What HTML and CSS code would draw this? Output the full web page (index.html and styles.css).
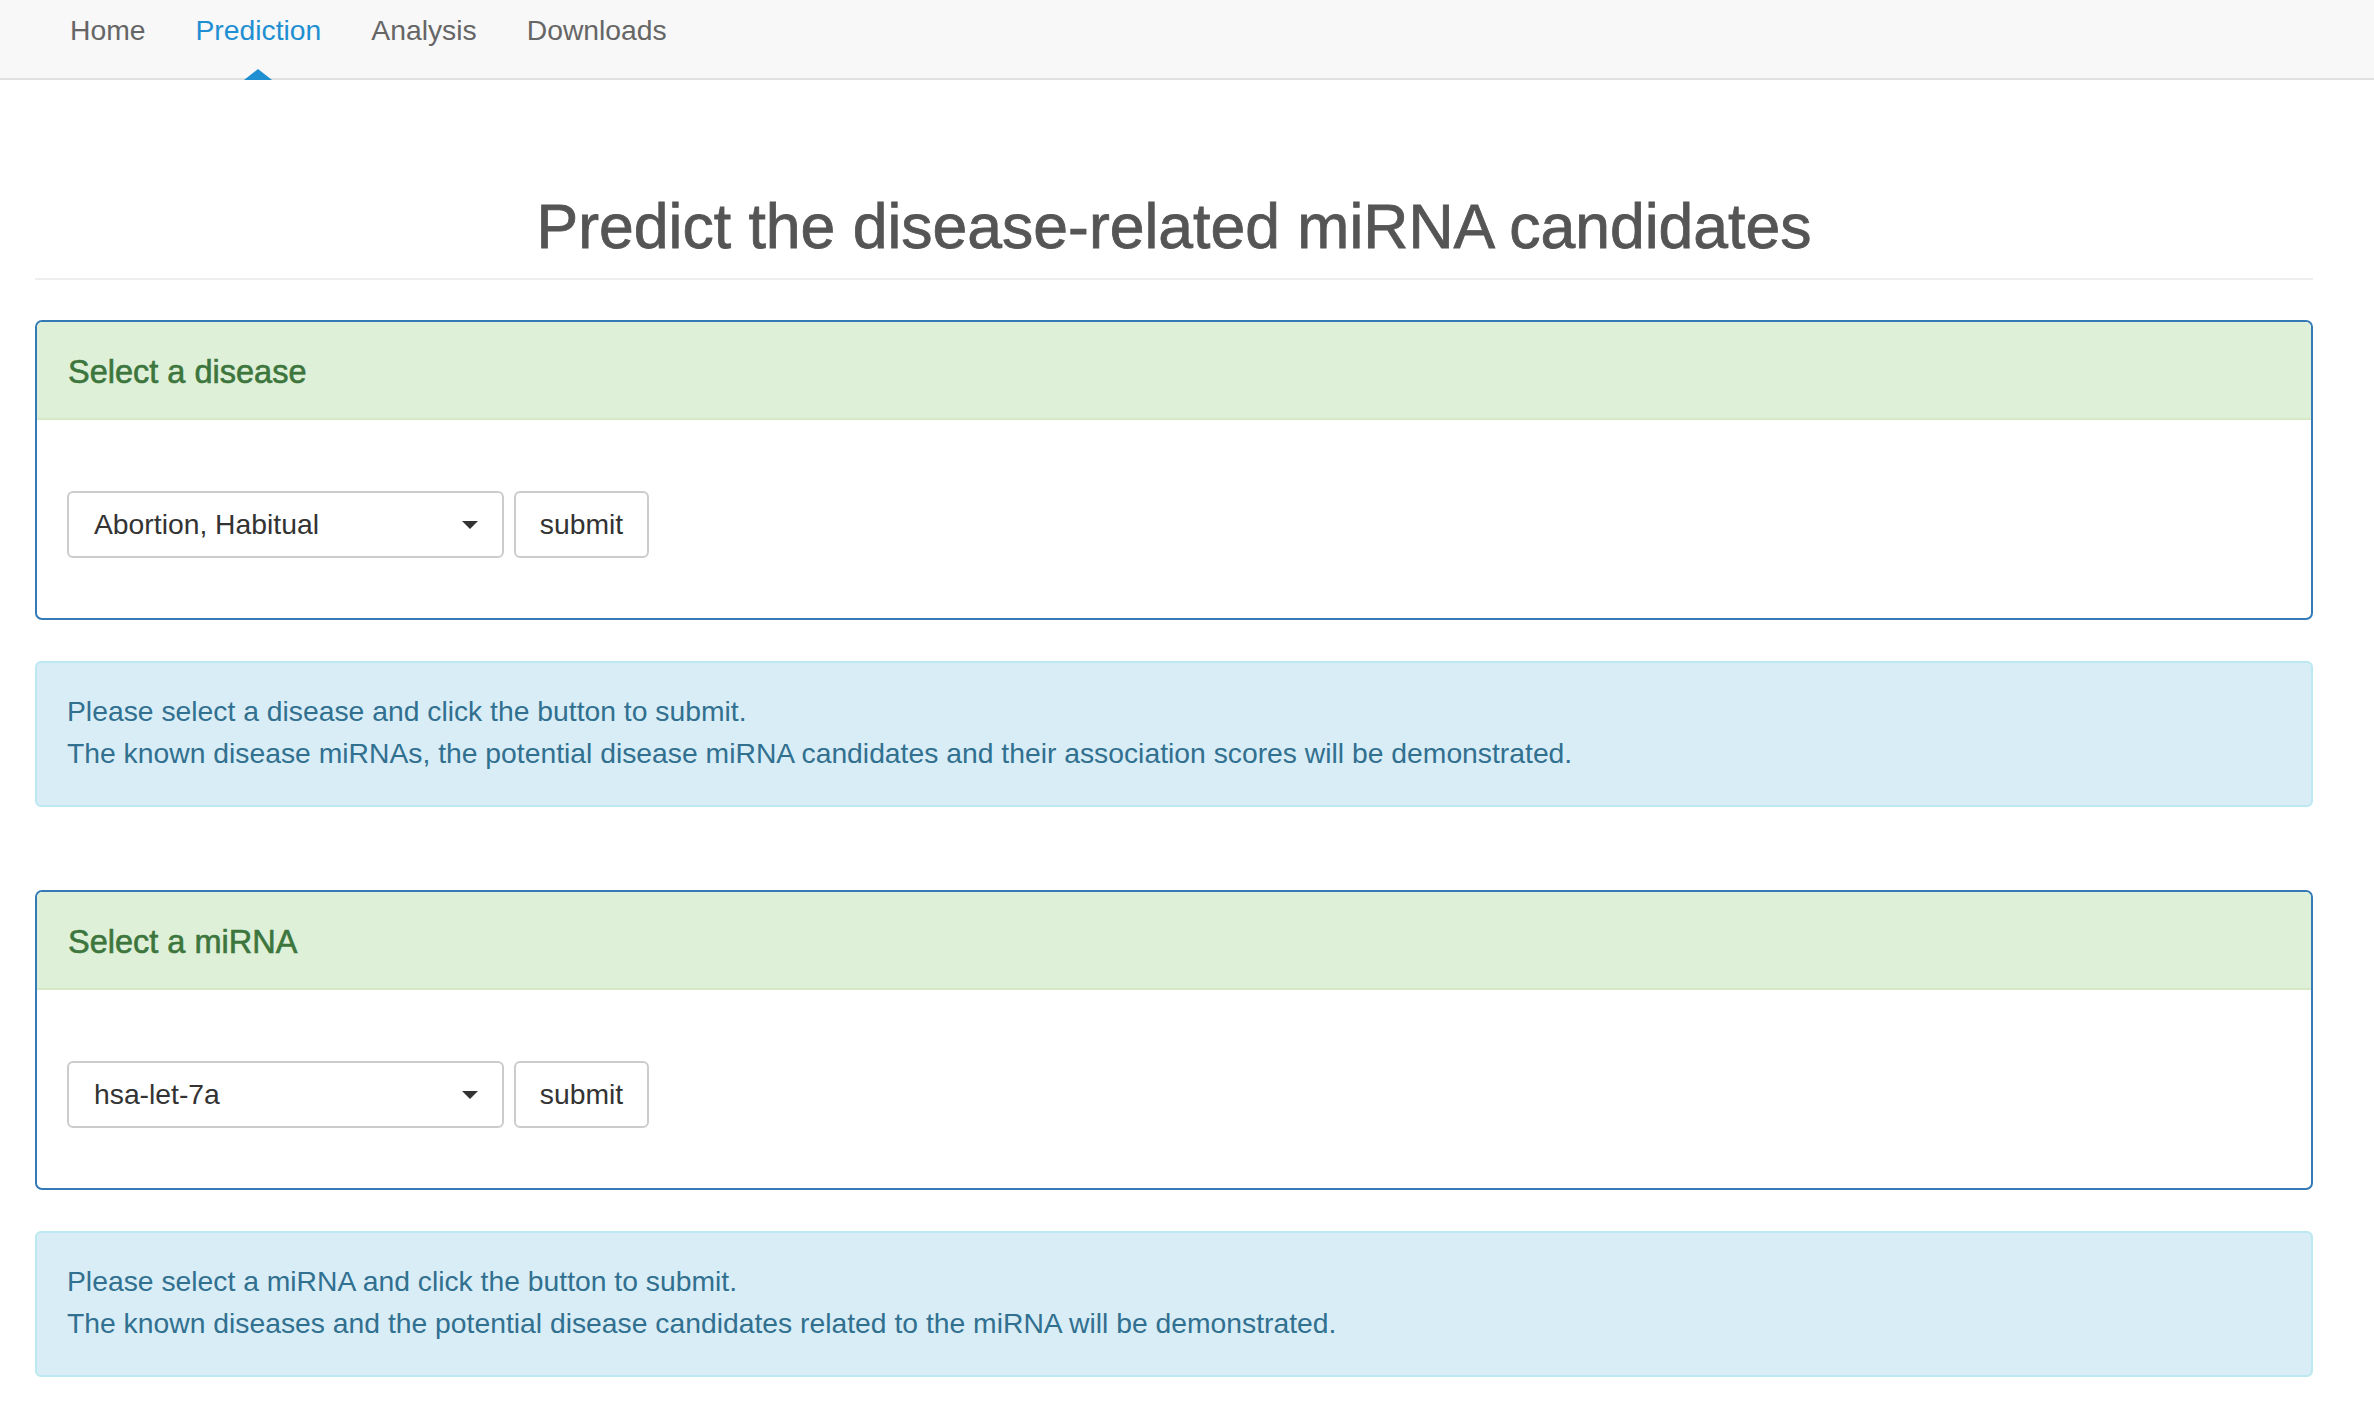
FILE: index.html
```html
<!DOCTYPE html>
<html lang="en">
<head>
<meta charset="utf-8">
<title>Prediction</title>
<link rel="stylesheet" href="styles.css">
</head>
<body>
<nav class="navbar">
  <ul class="nav">
    <li class="nav-item"><a href="#">Home</a></li>
    <li class="nav-item active"><a href="#">Prediction</a></li>
    <li class="nav-item"><a href="#">Analysis</a></li>
    <li class="nav-item"><a href="#">Downloads</a></li>
  </ul>
</nav>
<main class="container">
  <h1 class="page-title">Predict the disease-related miRNA candidates</h1>
  <hr class="rule">

  <section class="panel">
    <div class="panel-heading">Select a disease</div>
    <div class="panel-body">
      <div class="select"><span>Abortion, Habitual</span><span class="caret"></span></div>
      <button class="btn">submit</button>
    </div>
  </section>
  <div class="alert">
    <p>Please select a disease and click the button to submit.</p>
    <p>The known disease miRNAs, the potential disease miRNA candidates and their association scores will be demonstrated.</p>
  </div>

  <section class="panel panel-second">
    <div class="panel-heading">Select a miRNA</div>
    <div class="panel-body">
      <div class="select"><span>hsa-let-7a</span><span class="caret"></span></div>
      <button class="btn">submit</button>
    </div>
  </section>
  <div class="alert">
    <p>Please select a miRNA and click the button to submit.</p>
    <p>The known diseases and the potential disease candidates related to the miRNA will be demonstrated.</p>
  </div>
</main>
</body>
</html>
```

FILE: styles.css
```css
* { box-sizing: border-box; }
html, body { margin: 0; padding: 0; background: #fff; }
body {
  font-family: "Liberation Sans", Helvetica, Arial, sans-serif;
  color: #333;
}
.navbar {
  height: 80px;
  background: #f8f8f8;
  border-bottom: 2px solid #e0e0e0;
}
.nav {
  list-style: none;
  margin: 0;
  padding: 0 0 0 45px;
  display: flex;
  height: 78px;
}
.nav-item {
  position: relative;
  display: flex;
}
.nav-item a {
  display: block;
  padding: 10px 25px 0;
  line-height: 40px;
  font-size: 28.3px;
  color: #666;
  text-decoration: none;
}
.nav-item.active a { color: #1f8fd2; }
.nav-item.active::after {
  content: "";
  position: absolute;
  left: 50%;
  bottom: -2px;
  margin-left: -14px;
  border-left: 14px solid transparent;
  border-right: 14px solid transparent;
  border-bottom: 11px solid #1f8fd2;
}
.container {
  padding: 0 61px 40px 35px;
}
.page-title {
  margin: 0;
  padding-top: 105px;
  text-align: center;
  font-size: 62.5px;
  font-weight: 500;
  line-height: 82px;
  color: #555;
  -webkit-text-stroke: 0.8px #555;
}
.rule {
  margin: 11px 0 40px;
  border: 0;
  border-top: 2px solid #eee;
}
.panel {
  border: 2px solid #337ab7;
  border-radius: 7px;
  overflow: hidden;
}
.panel-second { margin-top: 83px; }
.panel-heading {
  height: 98px;
  background: #dff0d8;
  border-bottom: 2px solid #d6e9c6;
  border-radius: 5px 5px 0 0;
  padding: 4px 0 0 31px;
  display: flex;
  align-items: center;
  font-size: 32.5px;
  font-weight: 500;
  color: #3c763d;
  -webkit-text-stroke: 0.6px #3c763d;
}
.panel-body {
  padding: 71px 30px 60px;
  display: flex;
  gap: 10px;
}
.select {
  width: 437px;
  height: 67px;
  border: 2px solid #ccc;
  border-radius: 6px;
  display: flex;
  align-items: center;
  justify-content: space-between;
  padding: 0 24px 0 25px;
  font-size: 28.3px;
  color: #333;
}
.caret {
  width: 0;
  height: 0;
  border-left: 8px solid transparent;
  border-right: 8px solid transparent;
  border-top: 8px solid #333;
}
.btn {
  width: 135px;
  height: 67px;
  border: 2px solid #ccc;
  border-radius: 6px;
  background: #fff;
  font-family: inherit;
  font-size: 28.3px;
  color: #333;
  padding: 0;
}
.alert {
  margin-top: 41px;
  height: 146px;
  background: #d9edf7;
  border: 2px solid #bce8f1;
  border-radius: 6px;
  color: #31708f;
  padding: 0 30px 5px;
  display: flex;
  flex-direction: column;
  justify-content: center;
  font-size: 28.3px;
}
.alert p {
  margin: 0;
  line-height: 42px;
}
```
